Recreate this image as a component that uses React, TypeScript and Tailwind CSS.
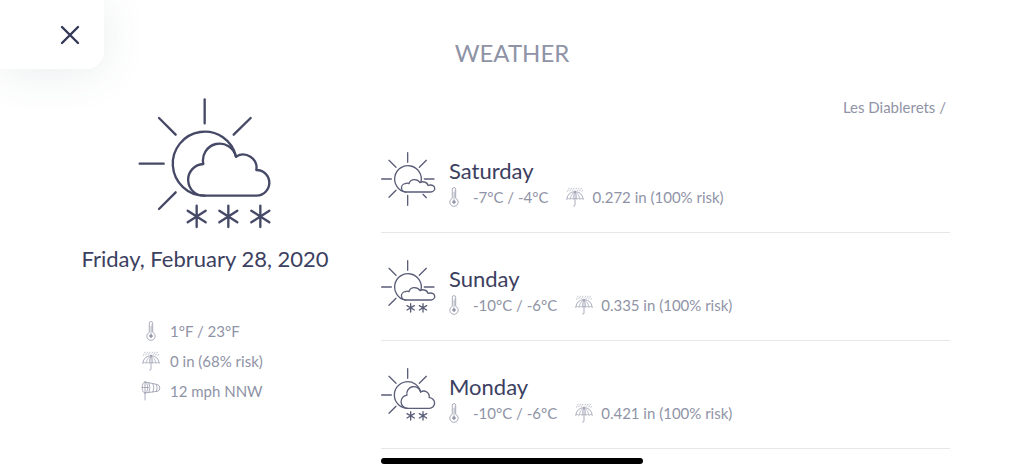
type Sky = "small-cloud" | "small-cloud-snow" | "big-cloud-snow";

const days: { name: string; temp: string; rain: string; sky: Sky }[] = [
  { name: "Saturday", temp: "-7°C / -4°C", rain: "0.272 in (100% risk)", sky: "small-cloud" },
  { name: "Sunday", temp: "-10°C / -6°C", rain: "0.335 in (100% risk)", sky: "small-cloud-snow" },
  { name: "Monday", temp: "-10°C / -6°C", rain: "0.421 in (100% risk)", sky: "big-cloud-snow" },
];

const TodayIcon = () => (
  <svg
    viewBox="24 21 402 402"
    className="size-[134px] text-[#454966]"
    fill="none"
    stroke="currentColor"
    strokeWidth="7"
    strokeLinecap="round"
    strokeLinejoin="round"
    aria-hidden="true"
  >
    <path d="M224 28v72M87 84l50 50M362 84l-51 50M29 221h72M87 357l50-50" />
    <path d="M224 317A96 96 0 1 1 318 200" />
    <path d="M224 317A47.5 47.5 0 0 1 220 222A50 50 0 0 1 318 200A40 40 0 0 1 379 240A38.5 38.5 0 0 1 380 317Z" />
    {[200, 295, 391].map((x) => (
      <path key={x} d={`M${x} 347v64M${x - 27} 362l54 35M${x + 27} 362l-54 35`} />
    ))}
  </svg>
);

const SkyIcon = ({ sky }: { sky: Sky }) => (
  <svg
    viewBox="32 39 165 165"
    className="size-[55px] shrink-0 text-[#5a5e78]"
    fill="none"
    stroke="currentColor"
    strokeWidth="4"
    strokeLinecap="round"
    strokeLinejoin="round"
    aria-hidden="true"
  >
    <path d="M112 41v29M34 120h29M56 64l21 21M168 64l-21 21M56 175l21-21" />
    {sky === "big-cloud-snow" ? (
      <>
        <path d="M112 160A40 40 0 1 1 151 111" />
        <path d="M112 160A19.8 19.8 0 0 1 110 120.5A20.8 20.8 0 0 1 151 111A16.7 16.7 0 0 1 176.5 128A16 16 0 0 1 177 160Z" />
      </>
    ) : (
      <>
        <path d="M106 159.5A40 40 0 1 1 152 129M162 120h29" />
        <path d="M107 159A12.500 12.500 0 0 1 105 134Q110 131 116 134Q119 122 132 122Q144 122 149 131Q154 127 162 129Q171 131 173 139Q183 136 190 141Q195 147 192 153Q188 159 182 159Z" />
      </>
    )}
    {sky === "small-cloud" ? (
      <path d="M112 169v30M158 166l10 10" />
    ) : (
      [121, 158].map((x) => (
        <path key={x} d={`M${x} 170v25M${x - 11} 176l22 13M${x + 11} 176l-22 13`} />
      ))
    )}
  </svg>
);

const Thermometer = () => (
  <svg
    viewBox="0 0 10 20"
    className="h-5 w-[10px] shrink-0 text-[#9598ab]"
    fill="none"
    stroke="currentColor"
    strokeWidth="0.8"
    aria-hidden="true"
  >
    <path d="M3.3 11.3V2.3a1.700 1.700 0 0 1 3.400 0v9a4.200 4.200 0 1 1-3.400 0Z" />
    <path d="M5 5v8M5 4h1.500M5 6h1.500M5 8h1.500M5 10h1.500" strokeWidth="0.6" />
    <circle cx="5" cy="15" r="1.400" fill="currentColor" />
  </svg>
);

const Umbrella = () => (
  <svg
    viewBox="0 0 18 20"
    className="h-5 w-[18px] shrink-0 text-[#9598ab]"
    fill="none"
    stroke="currentColor"
    strokeWidth="0.8"
    strokeLinecap="round"
    aria-hidden="true"
  >
    <path d="M.8 12Q1.800 5 9 4.600Q16.200 5 17.200 12" />
    <path d="M.8 12q1.600-1 3.200 0q1.600-1 3.200 0q1.800-1 3.600 0q1.600-1 3.200 0q1.600-1 3.200 0M4 12Q4.800 6.800 9 4.600Q13.200 6.800 14 12M7.200 12Q7.400 7 9 4.600Q10.600 7 10.800 12" strokeWidth="0.6" />
    <path d="M9 4v14q0 1.200-1.300 1.200" />
    <path
      d="M3 1.200l-.4 .8M5.500 1.200l-.4 .8M8 1.200l-.4 .8M10.500 1.200l-.4 .8M13 1.200l-.4 .8M15.500 1.200l-.4 .8M1.800 3.500l-.4 .8M4.200 3l-.4 .8M6.800 2.800l-.4 .6M11.800 2.800l-.4 .6M14.200 3l-.4 .8M16.400 3.500l-.4 .8"
      strokeWidth="0.6"
    />
  </svg>
);

const Windsock = () => (
  <svg
    viewBox="0 0 20 20"
    className="size-5 shrink-0 text-[#9598ab]"
    fill="none"
    stroke="currentColor"
    strokeWidth="0.8"
    strokeLinecap="round"
    aria-hidden="true"
  >
    <ellipse cx="4" cy="6.500" rx="2.800" ry="5.500" />
    <path d="M4 1l12.800 2.600q2 .7 2 3.400t-2 3.200L4 12" />
    <path d="M8 1.900q2 4.600 0 9.500M12 2.700q1.800 4 0 8.200M15.500 3.400q1.500 3.600 0 7M1.200 6.500h5.600M4 1v18" />
  </svg>
);

export default function App() {
  return (
    <div className="relative px-[74px] pt-[37px] font-['Lato',sans-serif] text-[15px] leading-5 text-[#8f93a6]">
      <button
        type="button"
        aria-label="Close"
        className="absolute top-0 left-0 flex h-[69px] w-[104px] items-center justify-end rounded-br-[18px] bg-white pr-6 shadow-[0_4px_44px_rgba(60,90,100,0.11)]"
      >
        <svg viewBox="0 0 20 20" className="size-5 text-[#343858]" stroke="currentColor" strokeWidth="2.400" strokeLinecap="round">
          <path d="M2 2l16 16M18 2L2 18" />
        </svg>
      </button>

      <h1 className="text-center text-[24px] leading-8">WEATHER</h1>

      <main className="flex gap-[45px] pt-7">
        <aside className="flex w-[262px] shrink-0 flex-col items-center">
          <TodayIcon />
          <h2 className="mt-3 text-[22px] leading-8 whitespace-nowrap text-[#3c4060]">Friday, February 28, 2020</h2>
          <ul className="mt-[46px] flex w-[128px] flex-col gap-[10px] whitespace-nowrap">
            <li className="flex items-center gap-[9px]">
              <span className="flex w-5 justify-center">
                <Thermometer />
              </span>
              1°F / 23°F
            </li>
            <li className="flex items-center gap-[9px]">
              <span className="flex w-5 justify-center">
                <Umbrella />
              </span>
              0 in (68% risk)
            </li>
            <li className="flex items-center gap-[9px]">
              <Windsock />
              12 mph NNW
            </li>
          </ul>
        </aside>

        <section className="flex-1">
          <p className="pr-1 text-right">Les Diablerets /</p>
          <ul className="pt-2">
            {days.map((day) => (
              <li key={day.name} className="flex items-end gap-[13px] border-b border-[#e6e7ea] pt-[27px] pb-[25px]">
                <SkyIcon sky={day.sky} />
                <div>
                  <h3 className="text-[22px] leading-8 text-[#3c4060]">{day.name}</h3>
                  <div className="flex items-center">
                    <Thermometer />
                    <span className="ml-[14px]">{day.temp}</span>
                    <span className="mr-2 ml-[18px]">
                      <Umbrella />
                    </span>
                    <span>{day.rain}</span>
                  </div>
                </div>
              </li>
            ))}
          </ul>
        </section>
      </main>

      <div className="fixed bottom-[9px] left-1/2 h-[6px] w-[262px] -translate-x-1/2 rounded-full bg-black" />
    </div>
  );
}
